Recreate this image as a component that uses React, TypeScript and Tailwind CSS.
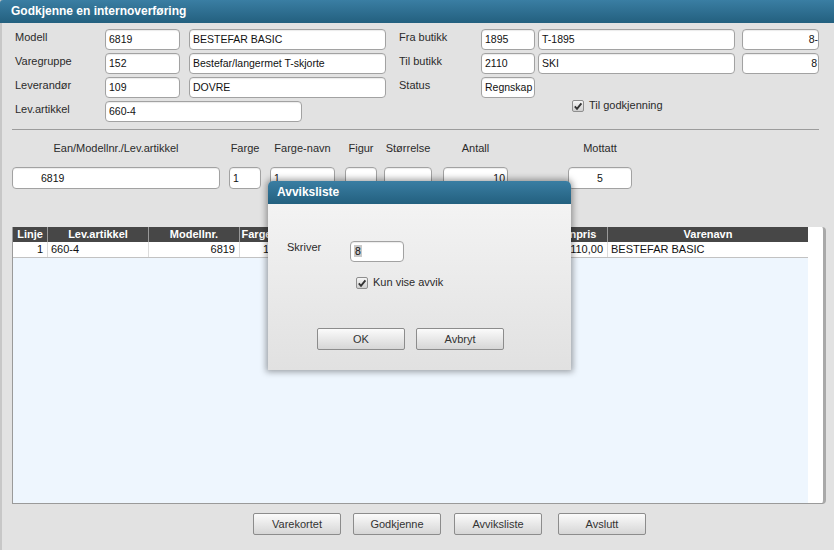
import clsx from "clsx"
import type { ReactNode } from "react"

// Gammeldags skjema-vindu: internoverføring med åpen "Avviksliste"-dialog

function Field({
  w,
  align = "left",
  className,
  children,
}: {
  w: string
  align?: "left" | "right" | "center"
  className?: string
  children?: ReactNode
}) {
  return (
    <div
      className={clsx(
        "h-[21px] shrink-0 overflow-hidden whitespace-nowrap rounded-[4px] border border-[#a2a2a2] bg-white px-[3px] text-[10.5px] leading-[19px] text-[#111] shadow-[inset_0_1px_1px_rgba(0,0,0,0.08)]",
        align === "right" && "text-right",
        align === "center" && "text-center",
        w,
        className
      )}
    >
      {children}
    </div>
  )
}

function Check() {
  return (
    <span className="inline-flex h-[12px] w-[12px] shrink-0 items-center justify-center rounded-[2px] border border-[#8e8e8e] bg-gradient-to-b from-[#f6f6f6] to-[#cfcfcf]">
      <svg width="10" height="10" viewBox="0 0 10 10">
        <path d="M1.8 5.4 L4 7.8 L8.4 2.4" fill="none" stroke="#333" strokeWidth="1.9" />
      </svg>
    </span>
  )
}

function Btn({ children, className }: { children: ReactNode; className?: string }) {
  return (
    <div
      className={clsx(
        "flex h-[22px] w-[88px] shrink-0 items-center justify-center rounded-[2px] border border-[#8c8c8c] bg-gradient-to-b from-[#fbfbfb] to-[#d6d6d6] text-[11px] text-[#333]",
        className
      )}
    >
      {children}
    </div>
  )
}

function Label({ w, children }: { w: string; children: ReactNode }) {
  return <div className={clsx("shrink-0 leading-[16px] text-[#2b2b2b]", w)}>{children}</div>
}

const cols = [
  { title: "Linje", w: "w-[35px]" },
  { title: "Lev.artikkel", w: "w-[101px]" },
  { title: "Modellnr.", w: "w-[91px]" },
  { title: "Farge", w: "w-[34px]" },
  { title: "Str", w: "w-[50px]" },
  { title: "Antall", w: "w-[60px]" },
  { title: "Mottatt", w: "w-[60px]" },
  { title: "Utpris", w: "w-[105px]" },
  { title: "Innpris", w: "w-[59px]" },
  { title: "Varenavn", w: "w-[200px]" },
]

const row = ["1", "660-4", "6819", "1", "", "10", "5", "", "110,00", "BESTEFAR BASIC"]
const rowAlign = ["r", "l", "r", "r", "l", "r", "r", "r", "r", "l"]

export default function App() {
  return (
    <div className="relative h-[550px] w-[834px] overflow-hidden bg-[#e2e2e2] font-['Liberation_Sans',Arial,sans-serif] text-[11px] shadow-[inset_2px_0_0_#c7c7c7]">
      {/* tittellinje */}
      <div className="h-[23px] rounded-tl-[3px] bg-gradient-to-b from-[#3a7ea3] to-[#23607f] pl-[11px] text-[12px] font-bold leading-[23px] text-white">
        Godkjenne en internoverføring
      </div>

      {/* toppfelt */}
      <div className="flex pt-[6px]">
        <div className="flex flex-col gap-[3px] pl-[15px]">
          <div className="flex">
            <Label w="w-[90px]">Modell</Label>
            <Field w="w-[75px]">6819</Field>
            <Field w="w-[197px]" className="ml-[9px]">BESTEFAR BASIC</Field>
          </div>
          <div className="flex">
            <Label w="w-[90px]">Varegruppe</Label>
            <Field w="w-[75px]">152</Field>
            <Field w="w-[197px]" className="ml-[9px]">Bestefar/langermet T-skjorte</Field>
          </div>
          <div className="flex">
            <Label w="w-[90px]">Leverandør</Label>
            <Field w="w-[75px]">109</Field>
            <Field w="w-[197px]" className="ml-[9px]">DOVRE</Field>
          </div>
          <div className="flex">
            <Label w="w-[90px]">Lev.artikkel</Label>
            <Field w="w-[197px]">660-4</Field>
          </div>
        </div>

        <div className="ml-[13px] flex flex-col gap-[3px]">
          <div className="flex">
            <Label w="w-[82px]">Fra butikk</Label>
            <Field w="w-[54px]">1895</Field>
            <Field w="w-[197px]" className="ml-[3px]">T-1895</Field>
            <Field w="w-[77px]" align="right" className="ml-[7px] pr-0">8-</Field>
          </div>
          <div className="flex">
            <Label w="w-[82px]">Til butikk</Label>
            <Field w="w-[54px]">2110</Field>
            <Field w="w-[197px]" className="ml-[3px]">SKI</Field>
            <Field w="w-[77px]" align="right" className="ml-[7px] pr-[1px]">8</Field>
          </div>
          <div className="flex">
            <Label w="w-[82px]">Status</Label>
            <Field w="w-[54px]" className="px-[2px]">Regnskap</Field>
          </div>
          <div className="-mt-[2px] flex h-[14px] items-center gap-[5px] pl-[173px]">
            <Check />
            <span className="-mt-[1px] text-[#2b2b2b]">Til godkjenning</span>
          </div>
        </div>
      </div>

      <div className="ml-[12px] mt-[7px] h-px w-[807px] bg-[#9c9c9c]" />

      {/* registreringslinje */}
      <div className="mt-[12px] flex pl-[12px]">
        {[
          { t: "Ean/Modellnr./Lev.artikkel", w: "w-[208px]", v: "6819", c: "pl-[28px]", m: "" },
          { t: "Farge", w: "w-[32px]", v: "1", c: "text-[#7d0a7d]", m: "ml-[9px]" },
          { t: "Farge-navn", w: "w-[65px]", v: "1", c: "text-[#7d0a7d]", m: "ml-[9px]" },
          { t: "Figur", w: "w-[32px]", v: "", c: "", m: "ml-[10px]" },
          { t: "Størrelse", w: "w-[48px]", v: "", c: "", m: "ml-[7px]" },
          { t: "Antall", w: "w-[65px]", v: "10", c: "text-right pr-[2px]", m: "ml-[11px]" },
          { t: "Mottatt", w: "w-[64px]", v: "5", c: "text-center", m: "ml-[60px]" },
        ].map((c) => (
          <div key={c.t} className={clsx("flex flex-col items-center gap-[12px]", c.m)}>
            <div className="whitespace-nowrap leading-[13px] text-[#2b2b2b]">{c.t}</div>
            <Field w={c.w} className={clsx("h-[22px] leading-[20px]", c.c)}>
              {c.v}
            </Field>
          </div>
        ))}
      </div>

      {/* tabell */}
      <div className="ml-[12px] mt-[38px] flex h-[277px] w-[814px] rounded-r-[4px] border-b border-l border-r-[3px] border-[#9a9a9a] border-r-[#a9a9a9] bg-white">
        <div className="flex w-[795px] flex-col">
          <div className="flex h-[15px] bg-[#474747]">
            {cols.map((c) => (
              <div
                key={c.title}
                className={clsx(
                  "shrink-0 overflow-hidden whitespace-nowrap border-r border-[#9a9a9a] text-center font-bold leading-[15px] text-white last:border-r-0",
                  c.w
                )}
              >
                {c.title}
              </div>
            ))}
          </div>
          <div className="flex h-[16px] border-b border-[#c2c2c2] bg-white">
            {cols.map((c, i) => (
              <div
                key={c.title}
                className={clsx(
                  "shrink-0 overflow-hidden whitespace-nowrap border-r border-[#dcdcdc] leading-[15px] text-[#111] last:border-r-0",
                  rowAlign[i] === "r" ? "pr-[4px] text-right" : "pl-[3px]",
                  c.w
                )}
              >
                {row[i]}
              </div>
            ))}
          </div>
          <div className="flex-1 bg-[#eef6fe]" />
        </div>
      </div>

      {/* knapper */}
      <div className="mt-[9px] flex pl-[253px]">
        <Btn>Varekortet</Btn>
        <Btn className="ml-[12px]">Godkjenne</Btn>
        <Btn className="ml-[13px]">Avviksliste</Btn>
        <Btn className="ml-[16px]">Avslutt</Btn>
      </div>

      {/* dialog */}
      <div className="absolute left-[268px] top-[181px] flex h-[189px] w-[303px] flex-col overflow-hidden rounded-t-[5px] shadow-[0_0_6px_2px_rgba(0,0,0,0.35)]">
        <div className="h-[23px] shrink-0 bg-gradient-to-b from-[#3a7ea3] to-[#23607f] pl-[9px] text-[12px] font-bold leading-[23px] text-white">
          Avviksliste
        </div>
        <div className="flex-1 bg-gradient-to-b from-[#f3f3f3] to-[#e1e1e1]">
          <div className="mt-[37px] flex items-start pl-[19px]">
            <div className="w-[63px] leading-[13px] text-[#2b2b2b]">Skriver</div>
            <Field w="w-[54px]" className="px-[2px]">
              <span className="bg-[#c9c9c9] px-[1px]">8</span>
            </Field>
          </div>
          <div className="mt-[15px] flex h-[12px] items-center gap-[5px] pl-[88px]">
            <Check />
            <span className="-mt-[2px] text-[#2b2b2b]">Kun vise avvik</span>
          </div>
          <div className="mt-[39px] flex pl-[49px]">
            <Btn>OK</Btn>
            <Btn className="ml-[11px]">Avbryt</Btn>
          </div>
        </div>
      </div>
    </div>
  )
}
